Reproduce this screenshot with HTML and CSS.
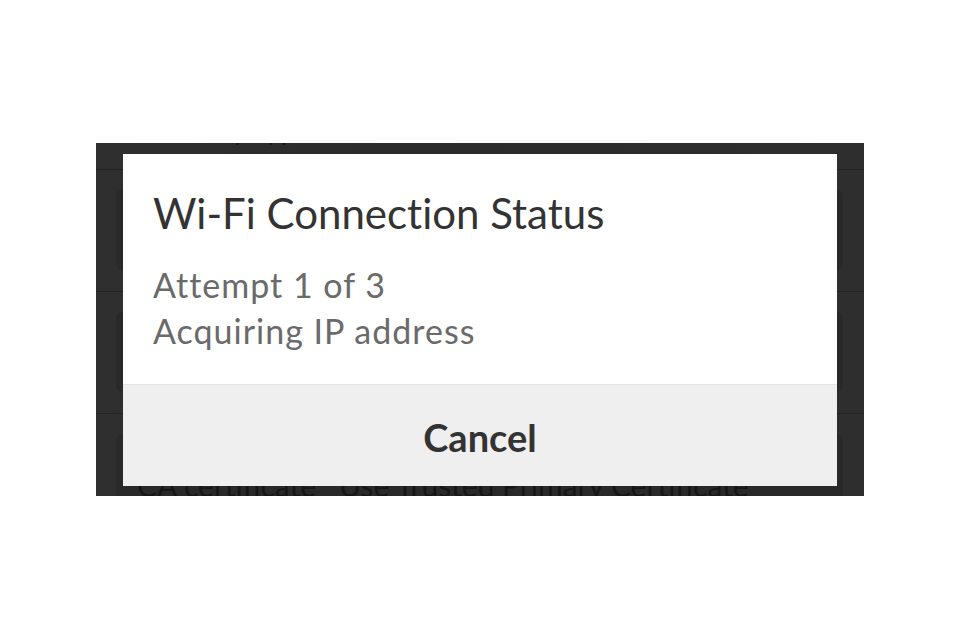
FILE: index.html
```html
<!DOCTYPE html>
<html lang="en">
<head>
<meta charset="utf-8">
<title>Wi-Fi Connection Status</title>
<link rel="stylesheet" href="styles.css">
</head>
<body>
<div class="stage">
  <div class="panel">
    <div class="ghost">
      <div class="g-label">Security type</div>
      <div class="g-row"><div class="g-box"></div></div>
      <div class="g-row"><div class="g-box"></div></div>
      <div class="g-row"><div class="g-box g-box-text">CA certificate&nbsp;&nbsp;&nbsp;Use Trusted Primary Certificate</div></div>
    </div>
    <div class="dialog" role="dialog" aria-labelledby="dlg-title">
      <div class="dialog-body">
        <h1 class="dialog-title" id="dlg-title">Wi-Fi Connection Status</h1>
        <p class="dialog-msg">Attempt 1 of 3<br>Acquiring IP address</p>
      </div>
      <div class="dialog-footer">
        <button class="btn-cancel" type="button">Cancel</button>
      </div>
    </div>
  </div>
</div>
</body>
</html>
```

FILE: styles.css
```css
html, body {
  margin: 0;
  padding: 0;
  background: #ffffff;
}
body {
  font-family: Lato, "Open Sans", "Liberation Sans", sans-serif;
  font-variant-ligatures: none;
}
.stage {
  padding: 143px 0 0 96px;
}
.panel {
  position: relative;
  width: 768px;
  height: 353px;
  overflow: hidden;
  background: linear-gradient(to right, #2f2f2f 0%, #2b2b2b 40%, #2e2e2e 100%);
}
.ghost {
  display: flex;
  flex-direction: column;
  margin-top: -33px;
}
.g-label {
  height: 59px;
  box-sizing: border-box;
  padding-left: 44px;
  font-size: 30px;
  line-height: 36px;
  color: #151515;
}
.g-row {
  border-top: 1px solid #232323;
  padding: 20px 21px 21px 20px;
}
.g-box {
  height: 80px;
  border-radius: 6px;
  background: #292929;
}
.g-box-text {
  height: 120px;
  box-sizing: border-box;
  padding: 33px 0 0 21px;
  font-size: 30px;
  line-height: 36px;
  color: #161616;
  white-space: nowrap;
}
.dialog {
  position: absolute;
  left: 27px;
  top: 11px;
  width: 714px;
  height: 332px;
  display: flex;
  flex-direction: column;
  background: #ffffff;
}
.dialog-body {
  height: 230px;
  box-sizing: border-box;
  padding: 35px 30px 0 30px;
}
.dialog-title {
  margin: 0;
  font-size: 42px;
  line-height: 48px;
  font-weight: 400;
  color: #333333;
}
.dialog-msg {
  margin: 25px 0 0 0;
  font-size: 34px;
  line-height: 46px;
  letter-spacing: 1px;
  color: #6a6a6a;
}
.dialog-footer {
  flex: 1;
  display: flex;
  align-items: center;
  justify-content: center;
  background: #efefef;
  border-top: 1px solid #e2e2e2;
}
.btn-cancel {
  border: 0;
  background: transparent;
  padding: 0;
  margin-top: 2px;
  font-family: Lato, "Open Sans", "Liberation Sans", sans-serif;
  font-size: 38px;
  font-weight: 700;
  color: #333333;
  cursor: pointer;
}
```
